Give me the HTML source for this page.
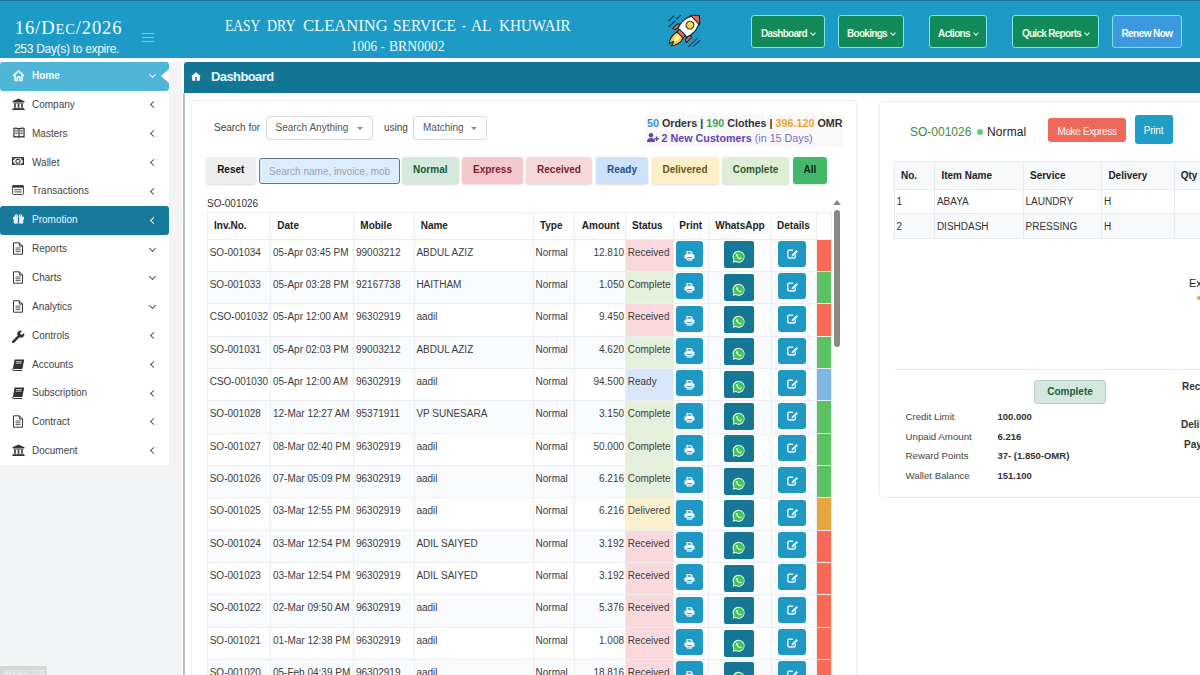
<!DOCTYPE html>
<html><head><meta charset="utf-8">
<style>
*{box-sizing:border-box;margin:0;padding:0}
html,body{width:1200px;height:675px;overflow:hidden}
body{position:relative;background:#f2f4f5;font-family:"Liberation Sans",sans-serif;color:#333}
.abs{position:absolute}
#hdr{left:0;top:0;width:1200px;height:58px;background:#1d9bc6}
#hl1{left:0;top:0;width:1200px;height:1px;background:#187188}
#hl2{left:0;top:1px;width:1200px;height:1px;background:#3098b8}
#whiteline{left:0;top:58px;width:1200px;height:3.5px;background:#fff}
.serif{font-family:"Liberation Serif",serif}
.date{left:14.8px;top:16px;letter-spacing:.9px;font-size:18.5px;color:#f4fbff;white-space:nowrap;line-height:24px}
.date small{font-size:14.5px}
.expire{left:14px;top:41px;font-size:12px;letter-spacing:-0.3px;color:#f4fbff;white-space:nowrap;line-height:16px}
.burger{left:142px;width:12px;height:1px;background:rgba(255,255,255,.45)}
.title{top:14px;font-size:17.5px;color:#f0fbff;white-space:nowrap;line-height:22px;transform-origin:0 0}
.sub{top:37px;font-size:15px;color:#f0fbff;white-space:nowrap;line-height:18px;transform-origin:0 0}
.nb{top:15px;height:33px;background:#138a5a;border:1px solid #7fe4e4;border-radius:3px;color:#eaffe6;font-size:10px;font-weight:bold;line-height:35px;text-align:center;white-space:nowrap;letter-spacing:-.7px}
.nb i{display:inline-block;width:4px;height:4px;border-right:1.5px solid #eaffe6;border-bottom:1.5px solid #eaffe6;transform:rotate(45deg);margin-left:4px;position:relative;top:-2px}
#side{left:0;top:62px;width:169px;height:402.5px;background:#fff}
.mi{position:absolute;left:0;width:169px;height:28.85px;font-size:10px;color:#444;line-height:28.85px}
.mi .t{position:absolute;left:32px;top:0}
.mi svg.ic{position:absolute;left:12px}
.mi .ch{position:absolute;left:151px;top:11.3px;width:5px;height:5px;border-left:1.5px solid #555;border-bottom:1.5px solid #555;transform:rotate(45deg)}
.mi .cd{position:absolute;left:149.5px;top:10.5px;width:5px;height:5px;border-right:1.5px solid #555;border-bottom:1.5px solid #555;transform:rotate(45deg)}
.mi.home{background:#50b6d7;border-radius:3px;color:#f2fbff;font-weight:bold}
.mi.home .cd{border-color:#f2fbff;border-width:0 1.8px 1.8px 0;top:9.8px}
.mi.promo{background:#177a9c;border-radius:3px;color:#eaf8ff}
.mi.promo .ch{border-color:#f2fbff}
.notch{position:absolute;left:161px;top:7px;width:0;height:0;border-top:7.5px solid transparent;border-bottom:7.5px solid transparent;border-right:8px solid #fff}
#pbar{left:184px;top:61.5px;width:1016px;height:31px;background:#137695;border-top-left-radius:3px}
#pbody{left:183px;top:92.5px;width:1017px;height:583px;background:#fff;border-left:2px solid #b5c4c4}
#wstrip{left:181.5px;top:61.5px;width:2px;height:614px;background:#fcfdfd}
.card{background:#fff;border:1px solid #ececec;border-radius:4px}
.lbl{font-size:10px;color:#444;white-space:nowrap}
.sel{height:24px;border:1px solid #d8d8d8;border-radius:3px;background:#fff;font-size:10px;color:#555;line-height:22px;padding-left:9px;white-space:nowrap}
.sel:after{content:"";position:absolute;right:9px;top:10px;border-left:3px solid transparent;border-right:3px solid transparent;border-top:3px solid #888}
.fb{top:156.5px;height:27px;border-radius:3px;font-size:10px;font-weight:bold;text-align:center;line-height:25px;box-shadow:0 1px 2px rgba(0,0,0,.15)}
table{border-collapse:collapse;table-layout:fixed}
#tbl{left:207px;top:212px;font-size:10px;color:#3c3c3c}
#tbl td,#tbl th{border:1px solid #eceef1;overflow:hidden;white-space:nowrap;padding:0}
#tbl th{height:26.5px;font-weight:bold;text-align:left;color:#222;background:#fff}
#tbl td{height:32.35px;vertical-align:top;padding:7px 0 0 1.7px;position:relative}
#tbl tr.s td{background:#f8fafc}
#tbl td.amt{text-align:right;padding-right:1px}
#tbl td.rc{background:#f9d9dc!important}
#tbl td.cp{background:#e4f0da!important}
#tbl td.rd{background:#d8e7fb!important}
#tbl td.dl{background:#fcf0cc!important}
.pbtn{position:absolute;left:1.6px;top:1.4px;width:27px;height:26px;background:#1f99c3;border-radius:3px}
.wbtn{position:absolute;left:14.5px;top:1.9px;width:30px;height:27px;background:#157696;border-radius:2px}
.dbtn{position:absolute;left:6px;top:1.4px;width:28px;height:26px;background:#1f99c3;border-radius:3px}
.bar{position:absolute;left:0;top:0;width:14px;height:100%}
.rt{font-size:10px;color:#333}
#itbl{left:894px;top:161px;width:320px;font-size:10px;color:#333}
#itbl td,#itbl th{border:1px solid #e9ecef;white-space:nowrap;text-align:left}
#itbl th{height:27.5px;background:#f6f8fa;font-weight:bold;color:#222;padding-left:6px}
#itbl td{height:24.75px;padding-left:1.5px}
#itbl tr.s td{background:#f8f9fa}

</style></head><body>
<div id="hdr" class="abs"></div>
<div id="hl1" class="abs"></div>
<div id="hl2" class="abs"></div>
<div id="whiteline" class="abs"></div>
<div class="abs serif date">16/D<small>EC</small>/2026</div>
<div class="abs expire">253 Day(s) to expire.</div>
<div class="abs burger" style="top:33px"></div>
<div class="abs burger" style="top:37px"></div>
<div class="abs burger" style="top:41px"></div>
<div class="abs serif title" style="left:224.9px;transform:scaleX(0.772)">EASY</div>
<div class="abs serif title" style="left:266.9px;transform:scaleX(0.792)">DRY</div>
<div class="abs serif title" style="left:302.9px;transform:scaleX(0.947)">CLEANING</div>
<div class="abs serif title" style="left:392.7px;transform:scaleX(0.878)">SERVICE</div>
<div class="abs serif title" style="left:462.2px;transform:scaleX(0.652)">-</div>
<div class="abs serif title" style="left:470.5px;transform:scaleX(0.879)">AL</div>
<div class="abs serif title" style="left:498.9px;transform:scaleX(0.866)">KHUWAIR</div>
<div class="abs serif sub" style="left:350.7px;transform:scaleX(0.867)">1006</div>
<div class="abs serif sub" style="left:380.7px;transform:scaleX(0.700)">-</div>
<div class="abs serif sub" style="left:389.2px;transform:scaleX(0.912)">BRN0002</div>
<svg class="abs" style="left:664.5px;top:11px" width="40" height="40" viewBox="-20 -20 40 40"><path d="M-16.5 -10 L-11 -15 M-16.5 -4 L-10 -10 M-8.5 -12 L-4.5 -15.5 M3.5 15.7 L12.2 7.3 M7.8 15.7 L15 9.5" stroke="#0b3d5c" stroke-width="1.1" stroke-linecap="round"/><g transform="translate(-1 -0.8) rotate(45) translate(0.6 0)"><path d="M-4 5.5 Q-6 10 -4.5 14 Q-3.5 17.5 -1.5 20 Q-1.2 17 0 15.5 Q1.2 17 1.5 20 Q3.5 17.5 4.5 14 Q6 10 4 5.5 Z" fill="#ffcf45" stroke="#1b1b1b" stroke-width="1"/><path d="M-2 7 Q-3 11 -0.8 15 Q0 13 0.8 15 Q3 11 2 7 Z" fill="#fff1b0"/><path d="M-6.8 -2 L-9.8 0 V7 L-6.8 5.5 Z M6.8 -2 L9.8 0 V7 L6.8 5.5 Z" fill="#f06a50" stroke="#1b1b1b" stroke-width="1"/><path d="M0 -21 Q8.2 -14.5 7.8 -5 Q7.6 0 6.2 3 H-6.2 Q-7.6 0 -7.8 -5 Q-8.2 -14.5 0 -21 Z" fill="#fff" stroke="#1b1b1b" stroke-width="1.1"/><path d="M0 -21 Q4.8 -17.5 6.3 -15 H-6.3 Q-4.8 -17.5 0 -21 Z" fill="#f06a50" stroke="#1b1b1b" stroke-width="1"/><circle cx="0" cy="-7.8" r="3.9" fill="#f6dc4a" stroke="#1b1b1b" stroke-width="1.1"/><rect x="-4.3" y="2.5" width="8.6" height="3.6" fill="#f06a50" stroke="#1b1b1b" stroke-width="1"/></g></svg>
<div class="abs nb" style="left:751px;width:74px">Dashboard<i></i></div>
<div class="abs nb" style="left:838px;width:66px">Bookings<i></i></div>
<div class="abs nb" style="left:929px;width:58px">Actions<i></i></div>
<div class="abs nb" style="left:1012px;width:87px">Quick Reports<i></i></div>
<div class="abs nb" style="left:1112px;width:70px;background:#3c98df;color:#fff;letter-spacing:-.55px">Renew Now</div>

<div id="side" class="abs"></div>
<div class="mi home" style="top:62.00px"><svg class="ic" style="top:7px" width="13" height="13" viewBox="0 0 13 13"><path d="M1.5 6.5 L6.5 1.8 L11.5 6.5 M3 5.3 V11.5 H5.3 V8 H7.7 V11.5 H10 V5.3" fill="none" stroke="#f2fbff" stroke-width="1.6" stroke-linejoin="round" stroke-linecap="round"/></svg><span class="t">Home</span><span class="cd"></span><div class="notch"></div></div>
<div class="mi" style="top:90.85px"><svg class="ic" style="top:6.8px" width="13" height="12" viewBox="0 0 13 12"><path d="M6.5 0.5 L12.5 3.2 V4.2 H0.5 V3.2 Z" fill="#333"/><rect x="1.5" y="4.6" width="10" height="0.9" fill="#333"/><rect x="2.2" y="5.6" width="1.6" height="4" fill="#333"/><rect x="5.7" y="5.6" width="1.6" height="4" fill="#333"/><rect x="9.2" y="5.6" width="1.6" height="4" fill="#333"/><rect x="1" y="9.8" width="11" height="1" fill="#333"/><rect x="0.3" y="10.9" width="12.4" height="1.1" fill="#333"/></svg><span class="t">Company</span><span class="ch"></span></div>
<div class="mi" style="top:119.70px"><svg class="ic" style="top:7px;left:12.5px" width="12" height="11" viewBox="0 0 13 12"><path d="M1 1.5 Q3.5 0.8 6.5 2 Q9.5 0.8 12 1.5 V10.8 Q9.5 10 6.5 11 Q3.5 10 1 10.8 Z M6.5 2 V11" fill="none" stroke="#333" stroke-width="1.3"/><path d="M2.3 3.6 H5.2 M2.3 5.4 H5.2 M2.3 7.2 H5.2 M7.8 3.6 H10.7 M7.8 5.4 H10.7 M7.8 7.2 H10.7" stroke="#333" stroke-width=".8"/></svg><span class="t">Masters</span><span class="ch"></span></div>
<div class="mi" style="top:148.55px"><svg class="ic" style="top:8.3px" width="12" height="8.5" viewBox="0 0 13 9"><rect x="0.6" y="0.6" width="11.8" height="7.8" fill="none" stroke="#333" stroke-width="1.3"/><path d="M0.6 2.8 Q2.6 2.8 2.6 0.6 M12.4 2.8 Q10.4 2.8 10.4 0.6 M0.6 6.2 Q2.6 6.2 2.6 8.4 M12.4 6.2 Q10.4 6.2 10.4 8.4" fill="none" stroke="#333" stroke-width="1.2"/><ellipse cx="6.5" cy="4.5" rx="2.3" ry="2.2" fill="none" stroke="#333" stroke-width="1.1"/></svg><span class="t">Wallet</span><span class="ch"></span></div>
<div class="mi" style="top:177.40px"><svg class="ic" style="top:7.5px" width="12" height="10" viewBox="0 0 13 11"><rect x="0.5" y="0.5" width="12" height="10" rx="1.2" fill="none" stroke="#333" stroke-width="1"/><rect x="0.5" y="0.5" width="12" height="2.4" fill="#333"/><path d="M2.5 5.2 H10.5 M2.5 7.6 H10.5" stroke="#333" stroke-width="1"/></svg><span class="t">Transactions</span><span class="ch"></span></div>
<div class="mi promo" style="top:206.25px"><svg class="ic" style="top:8px;left:13px" width="11" height="9.5" viewBox="0 0 11 9.5"><circle cx="3.4" cy="1.9" r="1.7" fill="#f2fbff"/><circle cx="7.6" cy="1.9" r="1.7" fill="#f2fbff"/><rect x="0" y="2.8" width="11" height="2.8" rx="0.6" fill="#f2fbff"/><rect x="0.8" y="5.2" width="9.4" height="4.3" fill="#f2fbff"/><rect x="4.8" y="3" width="1.4" height="6.5" fill="#177a9c"/><circle cx="3.4" cy="1.9" r=".6" fill="#177a9c"/><circle cx="7.6" cy="1.9" r=".6" fill="#177a9c"/></svg><span class="t">Promotion</span><span class="ch"></span></div>
<div class="mi" style="top:235.10px"><svg class="ic" style="top:6.8px" width="12" height="13" viewBox="0 0 12 13"><path d="M1.5 0.8 H7.3 L10.5 4 V12.2 H1.5 Z M7.3 0.8 V4 H10.5" fill="none" stroke="#333" stroke-width="1"/><path d="M3.5 6 H8.5 M3.5 7.8 H8.5 M3.5 9.6 H8.5" stroke="#333" stroke-width=".8"/></svg><span class="t">Reports</span><span class="cd"></span></div>
<div class="mi" style="top:263.95px"><svg class="ic" style="top:6.8px" width="12" height="13" viewBox="0 0 12 13"><path d="M1.5 0.8 H7.3 L10.5 4 V12.2 H1.5 Z M7.3 0.8 V4 H10.5" fill="none" stroke="#333" stroke-width="1"/><path d="M3.5 6 H8.5 M3.5 7.8 H8.5 M3.5 9.6 H8.5" stroke="#333" stroke-width=".8"/></svg><span class="t">Charts</span><span class="cd"></span></div>
<div class="mi" style="top:292.80px"><svg class="ic" style="top:6.8px" width="12" height="13" viewBox="0 0 12 13"><path d="M1.5 0.8 H7.3 L10.5 4 V12.2 H1.5 Z M7.3 0.8 V4 H10.5" fill="none" stroke="#333" stroke-width="1"/><path d="M3.5 6 H8.5 M3.5 7.8 H8.5 M3.5 9.6 H8.5" stroke="#333" stroke-width=".8"/></svg><span class="t">Analytics</span><span class="cd"></span></div>
<div class="mi" style="top:321.65px"><svg class="ic" style="top:8px" width="13" height="13" viewBox="0 0 13 13"><path d="M1.2 11.8 L6.2 6.8" stroke="#333" stroke-width="2.6" stroke-linecap="round"/><path d="M5.4 5.2 A3.4 3.4 0 0 1 10 0.9 L8.2 2.8 L8.6 4.4 L10.2 4.8 L12 3 A3.4 3.4 0 0 1 7.8 7.6 Z" fill="#333"/></svg><span class="t">Controls</span><span class="ch"></span></div>
<div class="mi" style="top:350.50px"><svg class="ic" style="top:8px" width="13" height="12" viewBox="0 0 13 12"><path d="M2.6 0.6 H12.2 L10.4 10 H0.8 Z" fill="#333"/><path d="M0.8 10 Q0.2 11.4 1.6 11.5 H10" fill="none" stroke="#333" stroke-width="1"/><path d="M4 2.6 H9.8 M3.7 4.2 H9.5" stroke="#fff" stroke-width=".7"/></svg><span class="t">Accounts</span><span class="ch"></span></div>
<div class="mi" style="top:379.35px"><svg class="ic" style="top:8px" width="13" height="12" viewBox="0 0 13 12"><path d="M2.6 0.6 H12.2 L10.4 10 H0.8 Z" fill="#333"/><path d="M0.8 10 Q0.2 11.4 1.6 11.5 H10" fill="none" stroke="#333" stroke-width="1"/><path d="M4 2.6 H9.8 M3.7 4.2 H9.5" stroke="#fff" stroke-width=".7"/></svg><span class="t">Subscription</span><span class="ch"></span></div>
<div class="mi" style="top:408.20px"><svg class="ic" style="top:6.8px" width="12" height="13" viewBox="0 0 12 13"><path d="M1.5 0.8 H7.3 L10.5 4 V12.2 H1.5 Z M7.3 0.8 V4 H10.5" fill="none" stroke="#333" stroke-width="1"/><path d="M3.5 6 H8.5 M3.5 7.8 H8.5 M3.5 9.6 H8.5" stroke="#333" stroke-width=".8"/></svg><span class="t">Contract</span><span class="ch"></span></div>
<div class="mi" style="top:437.05px"><svg class="ic" style="top:6.8px" width="13" height="12" viewBox="0 0 13 12"><path d="M6.5 0.5 L12.5 3.2 V4.2 H0.5 V3.2 Z" fill="#333"/><rect x="1.5" y="4.6" width="10" height="0.9" fill="#333"/><rect x="2.2" y="5.6" width="1.6" height="4" fill="#333"/><rect x="5.7" y="5.6" width="1.6" height="4" fill="#333"/><rect x="9.2" y="5.6" width="1.6" height="4" fill="#333"/><rect x="1" y="9.8" width="11" height="1" fill="#333"/><rect x="0.3" y="10.9" width="12.4" height="1.1" fill="#333"/></svg><span class="t">Document</span><span class="ch"></span></div>

<div id="wstrip" class="abs"></div>
<div id="pbar" class="abs"></div>
<div id="pbody" class="abs"></div>
<svg class="abs" style="left:191px;top:72px" width="10" height="9" viewBox="0 0 10 9"><path d="M5 0.3 L9.8 4.3 L8.8 4.3 V8.8 H1.2 V4.3 H0.2 Z" fill="#fff"/><rect x="4.2" y="5" width="1.6" height="3.8" fill="#137695"/></svg>
<div class="abs" style="left:211px;top:68.5px;font-size:13px;font-weight:bold;letter-spacing:-.6px;color:#e6f8ff;line-height:16px">Dashboard</div>

<div class="abs card" style="left:190.8px;top:100.3px;width:666.7px;height:600px"></div>
<div class="abs card" style="left:879px;top:100.5px;width:340px;height:397px"></div>

<div class="abs lbl" style="left:214px;top:122px">Search for</div>
<div class="abs sel" style="left:265.5px;top:115.5px;width:107px">Search Anything</div>
<div class="abs lbl" style="left:384px;top:122px">using</div>
<div class="abs sel" style="left:413px;top:115.5px;width:74px">Matching</div>

<div class="abs" style="left:645px;top:115px;width:198px;height:32px;background:#f9f9f9;border-radius:3px"></div>
<div class="abs" style="left:647px;top:116px;font-size:10.75px;font-weight:bold;color:#333;white-space:nowrap;line-height:14px"><span style="color:#2f8ee0">50</span> Orders | <span style="color:#3aa655">190</span> Clothes | <span style="color:#f0a030">396.120</span> OMR</div>
<svg class="abs" style="left:647px;top:133px" width="12" height="9" viewBox="0 0 12 9"><circle cx="4" cy="2.3" r="2.3" fill="#6443b4"/><path d="M0 9 Q0 5 4 5 Q8 5 8 9 Z" fill="#6443b4"/><path d="M9.6 3.6 V8 M7.4 5.8 H11.8" stroke="#6443b4" stroke-width="1.4"/></svg><div class="abs" style="left:661.5px;top:131px;font-size:10.75px;color:#7b69c4;white-space:nowrap;line-height:14px"><b style="color:#6443b4">2 New Customers</b> (in 15 Days)</div>

<div class="abs fb" style="left:206px;width:49.5px;background:#eeeeee;color:#111">Reset</div>
<div class="abs" style="left:259px;top:158px;width:140.5px;height:26px;background:#dcedfd;border:1px solid #5d7685;border-radius:3px;font-size:10px;color:#9aa3aa;line-height:25.5px;padding-left:9px;white-space:nowrap;overflow:hidden">Search name, invoice, mob</div>
<div class="abs fb" style="left:402px;width:56.5px;background:#d4e8dc;color:#1c5c38">Normal</div>
<div class="abs fb" style="left:462px;width:61px;background:#f4c9cd;color:#7a1f2c">Express</div>
<div class="abs fb" style="left:526px;width:66px;background:#f7d7da;color:#7a1f2c">Received</div>
<div class="abs fb" style="left:596px;width:52px;background:#cfe2fb;color:#1f4f8a">Ready</div>
<div class="abs fb" style="left:651.5px;width:67px;background:#fdf0c8;color:#6b5310">Delivered</div>
<div class="abs fb" style="left:722px;width:67px;background:#dfefd6;color:#2c5a30">Complete</div>
<div class="abs fb" style="left:793px;width:34px;background:#43b86a;color:#0c2a14">All</div>

<div class="abs" style="left:207px;top:198px;font-size:10px;color:#333;line-height:12px">SO-001026</div>
<table id="tbl" class="abs"><colgroup><col style="width:63.3px"><col style="width:83px"><col style="width:60.4px"><col style="width:119.2px"><col style="width:40.9px"><col style="width:51.3px"><col style="width:48.3px"><col style="width:34.9px"><col style="width:62.8px"><col style="width:45.1px"><col style="width:14.5px"></colgroup><tr><th style="padding-left:6px">Inv.No.</th><th style="padding-left:6px">Date</th><th style="padding-left:6px">Mobile</th><th style="padding-left:6px">Name</th><th style="padding-left:6px">Type</th><th style="padding-left:7px">Amount</th><th style="padding-left:6px">Status</th><th style="padding-left:5px">Print</th><th style="padding-left:6px">WhatsApp</th><th style="padding-left:5px">Details</th><th style="padding-left:0px"></th></tr><tr><td>SO-001034</td><td>05-Apr 03:45 PM</td><td>99003212</td><td>ABDUL AZIZ</td><td>Normal</td><td class="amt">12.810</td><td class="rc">Received</td><td><div class="pbtn"><svg width="11" height="10" viewBox="0 0 11 10" style="position:absolute;left:8px;top:10px"><path d="M3 0.6 H6.8 L8 1.8 V3.4 H3 Z" fill="none" stroke="#fff" stroke-width="1.1"/><rect x="0.5" y="3.4" width="10" height="4.4" rx="1.3" fill="#fff"/><rect x="2.8" y="6" width="5.4" height="1" fill="#3aa0c8"/><rect x="2.8" y="7" width="5.4" height="2.6" fill="#fff"/><rect x="3.6" y="7.8" width="3.8" height="0.9" fill="#6cc0dc"/></svg></div></td><td><div class="wbtn"><svg width="13.5" height="13.5" viewBox="0 0 16 16" style="position:absolute;left:8.3px;top:9px"><path d="M8 0.8 A7.1 7.1 0 0 0 1.8 11.6 L0.8 15.2 L4.5 14.2 A7.1 7.1 0 1 0 8 0.8 Z" fill="#fff"/><path d="M8 2 A6 6 0 0 0 2.9 11.2 L2.3 13.6 L4.8 13 A6 6 0 1 0 8 2 Z" fill="#3fc351"/><path d="M5.6 4.6 Q5 4.8 4.9 5.8 Q5 7.6 6.8 9.4 Q8.6 11 10.3 11 Q11.2 10.9 11.4 10.1 L11.4 9.6 L9.9 8.9 L9.2 9.6 Q8 9.2 6.8 7.6 L7.3 6.8 L6.6 5 Z" fill="#fff"/></svg></div></td><td><div class="dbtn"><svg width="12" height="10" viewBox="0 0 12 10" style="position:absolute;left:8.5px;top:8.5px"><path d="M6 1.3 H2.2 Q0.8 1.3 0.8 2.7 V7.6 Q0.8 9 2.2 9 H7 Q8.4 9 8.4 7.6 V5.6" fill="none" stroke="#e6fbff" stroke-width="1.4"/><path d="M4.6 7.4 L5 5.6 L9.6 1 L11 2.4 L6.4 7 Z" fill="#e6fbff"/></svg></div></td><td><div class="bar" style="background:#f86a56"></div></td></tr><tr class="s"><td>SO-001033</td><td>05-Apr 03:28 PM</td><td>92167738</td><td>HAITHAM</td><td>Normal</td><td class="amt">1.050</td><td class="cp">Complete</td><td><div class="pbtn"><svg width="11" height="10" viewBox="0 0 11 10" style="position:absolute;left:8px;top:10px"><path d="M3 0.6 H6.8 L8 1.8 V3.4 H3 Z" fill="none" stroke="#fff" stroke-width="1.1"/><rect x="0.5" y="3.4" width="10" height="4.4" rx="1.3" fill="#fff"/><rect x="2.8" y="6" width="5.4" height="1" fill="#3aa0c8"/><rect x="2.8" y="7" width="5.4" height="2.6" fill="#fff"/><rect x="3.6" y="7.8" width="3.8" height="0.9" fill="#6cc0dc"/></svg></div></td><td><div class="wbtn"><svg width="13.5" height="13.5" viewBox="0 0 16 16" style="position:absolute;left:8.3px;top:9px"><path d="M8 0.8 A7.1 7.1 0 0 0 1.8 11.6 L0.8 15.2 L4.5 14.2 A7.1 7.1 0 1 0 8 0.8 Z" fill="#fff"/><path d="M8 2 A6 6 0 0 0 2.9 11.2 L2.3 13.6 L4.8 13 A6 6 0 1 0 8 2 Z" fill="#3fc351"/><path d="M5.6 4.6 Q5 4.8 4.9 5.8 Q5 7.6 6.8 9.4 Q8.6 11 10.3 11 Q11.2 10.9 11.4 10.1 L11.4 9.6 L9.9 8.9 L9.2 9.6 Q8 9.2 6.8 7.6 L7.3 6.8 L6.6 5 Z" fill="#fff"/></svg></div></td><td><div class="dbtn"><svg width="12" height="10" viewBox="0 0 12 10" style="position:absolute;left:8.5px;top:8.5px"><path d="M6 1.3 H2.2 Q0.8 1.3 0.8 2.7 V7.6 Q0.8 9 2.2 9 H7 Q8.4 9 8.4 7.6 V5.6" fill="none" stroke="#e6fbff" stroke-width="1.4"/><path d="M4.6 7.4 L5 5.6 L9.6 1 L11 2.4 L6.4 7 Z" fill="#e6fbff"/></svg></div></td><td><div class="bar" style="background:#5cc163"></div></td></tr><tr><td>CSO-001032</td><td>05-Apr 12:00 AM</td><td>96302919</td><td>aadil</td><td>Normal</td><td class="amt">9.450</td><td class="rc">Received</td><td><div class="pbtn"><svg width="11" height="10" viewBox="0 0 11 10" style="position:absolute;left:8px;top:10px"><path d="M3 0.6 H6.8 L8 1.8 V3.4 H3 Z" fill="none" stroke="#fff" stroke-width="1.1"/><rect x="0.5" y="3.4" width="10" height="4.4" rx="1.3" fill="#fff"/><rect x="2.8" y="6" width="5.4" height="1" fill="#3aa0c8"/><rect x="2.8" y="7" width="5.4" height="2.6" fill="#fff"/><rect x="3.6" y="7.8" width="3.8" height="0.9" fill="#6cc0dc"/></svg></div></td><td><div class="wbtn"><svg width="13.5" height="13.5" viewBox="0 0 16 16" style="position:absolute;left:8.3px;top:9px"><path d="M8 0.8 A7.1 7.1 0 0 0 1.8 11.6 L0.8 15.2 L4.5 14.2 A7.1 7.1 0 1 0 8 0.8 Z" fill="#fff"/><path d="M8 2 A6 6 0 0 0 2.9 11.2 L2.3 13.6 L4.8 13 A6 6 0 1 0 8 2 Z" fill="#3fc351"/><path d="M5.6 4.6 Q5 4.8 4.9 5.8 Q5 7.6 6.8 9.4 Q8.6 11 10.3 11 Q11.2 10.9 11.4 10.1 L11.4 9.6 L9.9 8.9 L9.2 9.6 Q8 9.2 6.8 7.6 L7.3 6.8 L6.6 5 Z" fill="#fff"/></svg></div></td><td><div class="dbtn"><svg width="12" height="10" viewBox="0 0 12 10" style="position:absolute;left:8.5px;top:8.5px"><path d="M6 1.3 H2.2 Q0.8 1.3 0.8 2.7 V7.6 Q0.8 9 2.2 9 H7 Q8.4 9 8.4 7.6 V5.6" fill="none" stroke="#e6fbff" stroke-width="1.4"/><path d="M4.6 7.4 L5 5.6 L9.6 1 L11 2.4 L6.4 7 Z" fill="#e6fbff"/></svg></div></td><td><div class="bar" style="background:#f86a56"></div></td></tr><tr class="s"><td>SO-001031</td><td>05-Apr 02:03 PM</td><td>99003212</td><td>ABDUL AZIZ</td><td>Normal</td><td class="amt">4.620</td><td class="cp">Complete</td><td><div class="pbtn"><svg width="11" height="10" viewBox="0 0 11 10" style="position:absolute;left:8px;top:10px"><path d="M3 0.6 H6.8 L8 1.8 V3.4 H3 Z" fill="none" stroke="#fff" stroke-width="1.1"/><rect x="0.5" y="3.4" width="10" height="4.4" rx="1.3" fill="#fff"/><rect x="2.8" y="6" width="5.4" height="1" fill="#3aa0c8"/><rect x="2.8" y="7" width="5.4" height="2.6" fill="#fff"/><rect x="3.6" y="7.8" width="3.8" height="0.9" fill="#6cc0dc"/></svg></div></td><td><div class="wbtn"><svg width="13.5" height="13.5" viewBox="0 0 16 16" style="position:absolute;left:8.3px;top:9px"><path d="M8 0.8 A7.1 7.1 0 0 0 1.8 11.6 L0.8 15.2 L4.5 14.2 A7.1 7.1 0 1 0 8 0.8 Z" fill="#fff"/><path d="M8 2 A6 6 0 0 0 2.9 11.2 L2.3 13.6 L4.8 13 A6 6 0 1 0 8 2 Z" fill="#3fc351"/><path d="M5.6 4.6 Q5 4.8 4.9 5.8 Q5 7.6 6.8 9.4 Q8.6 11 10.3 11 Q11.2 10.9 11.4 10.1 L11.4 9.6 L9.9 8.9 L9.2 9.6 Q8 9.2 6.8 7.6 L7.3 6.8 L6.6 5 Z" fill="#fff"/></svg></div></td><td><div class="dbtn"><svg width="12" height="10" viewBox="0 0 12 10" style="position:absolute;left:8.5px;top:8.5px"><path d="M6 1.3 H2.2 Q0.8 1.3 0.8 2.7 V7.6 Q0.8 9 2.2 9 H7 Q8.4 9 8.4 7.6 V5.6" fill="none" stroke="#e6fbff" stroke-width="1.4"/><path d="M4.6 7.4 L5 5.6 L9.6 1 L11 2.4 L6.4 7 Z" fill="#e6fbff"/></svg></div></td><td><div class="bar" style="background:#5cc163"></div></td></tr><tr><td>CSO-001030</td><td>05-Apr 12:00 AM</td><td>96302919</td><td>aadil</td><td>Normal</td><td class="amt">94.500</td><td class="rd">Ready</td><td><div class="pbtn"><svg width="11" height="10" viewBox="0 0 11 10" style="position:absolute;left:8px;top:10px"><path d="M3 0.6 H6.8 L8 1.8 V3.4 H3 Z" fill="none" stroke="#fff" stroke-width="1.1"/><rect x="0.5" y="3.4" width="10" height="4.4" rx="1.3" fill="#fff"/><rect x="2.8" y="6" width="5.4" height="1" fill="#3aa0c8"/><rect x="2.8" y="7" width="5.4" height="2.6" fill="#fff"/><rect x="3.6" y="7.8" width="3.8" height="0.9" fill="#6cc0dc"/></svg></div></td><td><div class="wbtn"><svg width="13.5" height="13.5" viewBox="0 0 16 16" style="position:absolute;left:8.3px;top:9px"><path d="M8 0.8 A7.1 7.1 0 0 0 1.8 11.6 L0.8 15.2 L4.5 14.2 A7.1 7.1 0 1 0 8 0.8 Z" fill="#fff"/><path d="M8 2 A6 6 0 0 0 2.9 11.2 L2.3 13.6 L4.8 13 A6 6 0 1 0 8 2 Z" fill="#3fc351"/><path d="M5.6 4.6 Q5 4.8 4.9 5.8 Q5 7.6 6.8 9.4 Q8.6 11 10.3 11 Q11.2 10.9 11.4 10.1 L11.4 9.6 L9.9 8.9 L9.2 9.6 Q8 9.2 6.8 7.6 L7.3 6.8 L6.6 5 Z" fill="#fff"/></svg></div></td><td><div class="dbtn"><svg width="12" height="10" viewBox="0 0 12 10" style="position:absolute;left:8.5px;top:8.5px"><path d="M6 1.3 H2.2 Q0.8 1.3 0.8 2.7 V7.6 Q0.8 9 2.2 9 H7 Q8.4 9 8.4 7.6 V5.6" fill="none" stroke="#e6fbff" stroke-width="1.4"/><path d="M4.6 7.4 L5 5.6 L9.6 1 L11 2.4 L6.4 7 Z" fill="#e6fbff"/></svg></div></td><td><div class="bar" style="background:#7db7e2"></div></td></tr><tr class="s"><td>SO-001028</td><td>12-Mar 12:27 AM</td><td>95371911</td><td>VP SUNESARA</td><td>Normal</td><td class="amt">3.150</td><td class="cp">Complete</td><td><div class="pbtn"><svg width="11" height="10" viewBox="0 0 11 10" style="position:absolute;left:8px;top:10px"><path d="M3 0.6 H6.8 L8 1.8 V3.4 H3 Z" fill="none" stroke="#fff" stroke-width="1.1"/><rect x="0.5" y="3.4" width="10" height="4.4" rx="1.3" fill="#fff"/><rect x="2.8" y="6" width="5.4" height="1" fill="#3aa0c8"/><rect x="2.8" y="7" width="5.4" height="2.6" fill="#fff"/><rect x="3.6" y="7.8" width="3.8" height="0.9" fill="#6cc0dc"/></svg></div></td><td><div class="wbtn"><svg width="13.5" height="13.5" viewBox="0 0 16 16" style="position:absolute;left:8.3px;top:9px"><path d="M8 0.8 A7.1 7.1 0 0 0 1.8 11.6 L0.8 15.2 L4.5 14.2 A7.1 7.1 0 1 0 8 0.8 Z" fill="#fff"/><path d="M8 2 A6 6 0 0 0 2.9 11.2 L2.3 13.6 L4.8 13 A6 6 0 1 0 8 2 Z" fill="#3fc351"/><path d="M5.6 4.6 Q5 4.8 4.9 5.8 Q5 7.6 6.8 9.4 Q8.6 11 10.3 11 Q11.2 10.9 11.4 10.1 L11.4 9.6 L9.9 8.9 L9.2 9.6 Q8 9.2 6.8 7.6 L7.3 6.8 L6.6 5 Z" fill="#fff"/></svg></div></td><td><div class="dbtn"><svg width="12" height="10" viewBox="0 0 12 10" style="position:absolute;left:8.5px;top:8.5px"><path d="M6 1.3 H2.2 Q0.8 1.3 0.8 2.7 V7.6 Q0.8 9 2.2 9 H7 Q8.4 9 8.4 7.6 V5.6" fill="none" stroke="#e6fbff" stroke-width="1.4"/><path d="M4.6 7.4 L5 5.6 L9.6 1 L11 2.4 L6.4 7 Z" fill="#e6fbff"/></svg></div></td><td><div class="bar" style="background:#5cc163"></div></td></tr><tr><td>SO-001027</td><td>08-Mar 02:40 PM</td><td>96302919</td><td>aadil</td><td>Normal</td><td class="amt">50.000</td><td class="cp">Complete</td><td><div class="pbtn"><svg width="11" height="10" viewBox="0 0 11 10" style="position:absolute;left:8px;top:10px"><path d="M3 0.6 H6.8 L8 1.8 V3.4 H3 Z" fill="none" stroke="#fff" stroke-width="1.1"/><rect x="0.5" y="3.4" width="10" height="4.4" rx="1.3" fill="#fff"/><rect x="2.8" y="6" width="5.4" height="1" fill="#3aa0c8"/><rect x="2.8" y="7" width="5.4" height="2.6" fill="#fff"/><rect x="3.6" y="7.8" width="3.8" height="0.9" fill="#6cc0dc"/></svg></div></td><td><div class="wbtn"><svg width="13.5" height="13.5" viewBox="0 0 16 16" style="position:absolute;left:8.3px;top:9px"><path d="M8 0.8 A7.1 7.1 0 0 0 1.8 11.6 L0.8 15.2 L4.5 14.2 A7.1 7.1 0 1 0 8 0.8 Z" fill="#fff"/><path d="M8 2 A6 6 0 0 0 2.9 11.2 L2.3 13.6 L4.8 13 A6 6 0 1 0 8 2 Z" fill="#3fc351"/><path d="M5.6 4.6 Q5 4.8 4.9 5.8 Q5 7.6 6.8 9.4 Q8.6 11 10.3 11 Q11.2 10.9 11.4 10.1 L11.4 9.6 L9.9 8.9 L9.2 9.6 Q8 9.2 6.8 7.6 L7.3 6.8 L6.6 5 Z" fill="#fff"/></svg></div></td><td><div class="dbtn"><svg width="12" height="10" viewBox="0 0 12 10" style="position:absolute;left:8.5px;top:8.5px"><path d="M6 1.3 H2.2 Q0.8 1.3 0.8 2.7 V7.6 Q0.8 9 2.2 9 H7 Q8.4 9 8.4 7.6 V5.6" fill="none" stroke="#e6fbff" stroke-width="1.4"/><path d="M4.6 7.4 L5 5.6 L9.6 1 L11 2.4 L6.4 7 Z" fill="#e6fbff"/></svg></div></td><td><div class="bar" style="background:#5cc163"></div></td></tr><tr class="s"><td>SO-001026</td><td>07-Mar 05:09 PM</td><td>96302919</td><td>aadil</td><td>Normal</td><td class="amt">6.216</td><td class="cp">Complete</td><td><div class="pbtn"><svg width="11" height="10" viewBox="0 0 11 10" style="position:absolute;left:8px;top:10px"><path d="M3 0.6 H6.8 L8 1.8 V3.4 H3 Z" fill="none" stroke="#fff" stroke-width="1.1"/><rect x="0.5" y="3.4" width="10" height="4.4" rx="1.3" fill="#fff"/><rect x="2.8" y="6" width="5.4" height="1" fill="#3aa0c8"/><rect x="2.8" y="7" width="5.4" height="2.6" fill="#fff"/><rect x="3.6" y="7.8" width="3.8" height="0.9" fill="#6cc0dc"/></svg></div></td><td><div class="wbtn"><svg width="13.5" height="13.5" viewBox="0 0 16 16" style="position:absolute;left:8.3px;top:9px"><path d="M8 0.8 A7.1 7.1 0 0 0 1.8 11.6 L0.8 15.2 L4.5 14.2 A7.1 7.1 0 1 0 8 0.8 Z" fill="#fff"/><path d="M8 2 A6 6 0 0 0 2.9 11.2 L2.3 13.6 L4.8 13 A6 6 0 1 0 8 2 Z" fill="#3fc351"/><path d="M5.6 4.6 Q5 4.8 4.9 5.8 Q5 7.6 6.8 9.4 Q8.6 11 10.3 11 Q11.2 10.9 11.4 10.1 L11.4 9.6 L9.9 8.9 L9.2 9.6 Q8 9.2 6.8 7.6 L7.3 6.8 L6.6 5 Z" fill="#fff"/></svg></div></td><td><div class="dbtn"><svg width="12" height="10" viewBox="0 0 12 10" style="position:absolute;left:8.5px;top:8.5px"><path d="M6 1.3 H2.2 Q0.8 1.3 0.8 2.7 V7.6 Q0.8 9 2.2 9 H7 Q8.4 9 8.4 7.6 V5.6" fill="none" stroke="#e6fbff" stroke-width="1.4"/><path d="M4.6 7.4 L5 5.6 L9.6 1 L11 2.4 L6.4 7 Z" fill="#e6fbff"/></svg></div></td><td><div class="bar" style="background:#5cc163"></div></td></tr><tr><td>SO-001025</td><td>03-Mar 12:55 PM</td><td>96302919</td><td>aadil</td><td>Normal</td><td class="amt">6.216</td><td class="dl">Delivered</td><td><div class="pbtn"><svg width="11" height="10" viewBox="0 0 11 10" style="position:absolute;left:8px;top:10px"><path d="M3 0.6 H6.8 L8 1.8 V3.4 H3 Z" fill="none" stroke="#fff" stroke-width="1.1"/><rect x="0.5" y="3.4" width="10" height="4.4" rx="1.3" fill="#fff"/><rect x="2.8" y="6" width="5.4" height="1" fill="#3aa0c8"/><rect x="2.8" y="7" width="5.4" height="2.6" fill="#fff"/><rect x="3.6" y="7.8" width="3.8" height="0.9" fill="#6cc0dc"/></svg></div></td><td><div class="wbtn"><svg width="13.5" height="13.5" viewBox="0 0 16 16" style="position:absolute;left:8.3px;top:9px"><path d="M8 0.8 A7.1 7.1 0 0 0 1.8 11.6 L0.8 15.2 L4.5 14.2 A7.1 7.1 0 1 0 8 0.8 Z" fill="#fff"/><path d="M8 2 A6 6 0 0 0 2.9 11.2 L2.3 13.6 L4.8 13 A6 6 0 1 0 8 2 Z" fill="#3fc351"/><path d="M5.6 4.6 Q5 4.8 4.9 5.8 Q5 7.6 6.8 9.4 Q8.6 11 10.3 11 Q11.2 10.9 11.4 10.1 L11.4 9.6 L9.9 8.9 L9.2 9.6 Q8 9.2 6.8 7.6 L7.3 6.8 L6.6 5 Z" fill="#fff"/></svg></div></td><td><div class="dbtn"><svg width="12" height="10" viewBox="0 0 12 10" style="position:absolute;left:8.5px;top:8.5px"><path d="M6 1.3 H2.2 Q0.8 1.3 0.8 2.7 V7.6 Q0.8 9 2.2 9 H7 Q8.4 9 8.4 7.6 V5.6" fill="none" stroke="#e6fbff" stroke-width="1.4"/><path d="M4.6 7.4 L5 5.6 L9.6 1 L11 2.4 L6.4 7 Z" fill="#e6fbff"/></svg></div></td><td><div class="bar" style="background:#e6a73e"></div></td></tr><tr class="s"><td>SO-001024</td><td>03-Mar 12:54 PM</td><td>96302919</td><td>ADIL SAIYED</td><td>Normal</td><td class="amt">3.192</td><td class="rc">Received</td><td><div class="pbtn"><svg width="11" height="10" viewBox="0 0 11 10" style="position:absolute;left:8px;top:10px"><path d="M3 0.6 H6.8 L8 1.8 V3.4 H3 Z" fill="none" stroke="#fff" stroke-width="1.1"/><rect x="0.5" y="3.4" width="10" height="4.4" rx="1.3" fill="#fff"/><rect x="2.8" y="6" width="5.4" height="1" fill="#3aa0c8"/><rect x="2.8" y="7" width="5.4" height="2.6" fill="#fff"/><rect x="3.6" y="7.8" width="3.8" height="0.9" fill="#6cc0dc"/></svg></div></td><td><div class="wbtn"><svg width="13.5" height="13.5" viewBox="0 0 16 16" style="position:absolute;left:8.3px;top:9px"><path d="M8 0.8 A7.1 7.1 0 0 0 1.8 11.6 L0.8 15.2 L4.5 14.2 A7.1 7.1 0 1 0 8 0.8 Z" fill="#fff"/><path d="M8 2 A6 6 0 0 0 2.9 11.2 L2.3 13.6 L4.8 13 A6 6 0 1 0 8 2 Z" fill="#3fc351"/><path d="M5.6 4.6 Q5 4.8 4.9 5.8 Q5 7.6 6.8 9.4 Q8.6 11 10.3 11 Q11.2 10.9 11.4 10.1 L11.4 9.6 L9.9 8.9 L9.2 9.6 Q8 9.2 6.8 7.6 L7.3 6.8 L6.6 5 Z" fill="#fff"/></svg></div></td><td><div class="dbtn"><svg width="12" height="10" viewBox="0 0 12 10" style="position:absolute;left:8.5px;top:8.5px"><path d="M6 1.3 H2.2 Q0.8 1.3 0.8 2.7 V7.6 Q0.8 9 2.2 9 H7 Q8.4 9 8.4 7.6 V5.6" fill="none" stroke="#e6fbff" stroke-width="1.4"/><path d="M4.6 7.4 L5 5.6 L9.6 1 L11 2.4 L6.4 7 Z" fill="#e6fbff"/></svg></div></td><td><div class="bar" style="background:#f86a56"></div></td></tr><tr><td>SO-001023</td><td>03-Mar 12:54 PM</td><td>96302919</td><td>ADIL SAIYED</td><td>Normal</td><td class="amt">3.192</td><td class="rc">Received</td><td><div class="pbtn"><svg width="11" height="10" viewBox="0 0 11 10" style="position:absolute;left:8px;top:10px"><path d="M3 0.6 H6.8 L8 1.8 V3.4 H3 Z" fill="none" stroke="#fff" stroke-width="1.1"/><rect x="0.5" y="3.4" width="10" height="4.4" rx="1.3" fill="#fff"/><rect x="2.8" y="6" width="5.4" height="1" fill="#3aa0c8"/><rect x="2.8" y="7" width="5.4" height="2.6" fill="#fff"/><rect x="3.6" y="7.8" width="3.8" height="0.9" fill="#6cc0dc"/></svg></div></td><td><div class="wbtn"><svg width="13.5" height="13.5" viewBox="0 0 16 16" style="position:absolute;left:8.3px;top:9px"><path d="M8 0.8 A7.1 7.1 0 0 0 1.8 11.6 L0.8 15.2 L4.5 14.2 A7.1 7.1 0 1 0 8 0.8 Z" fill="#fff"/><path d="M8 2 A6 6 0 0 0 2.9 11.2 L2.3 13.6 L4.8 13 A6 6 0 1 0 8 2 Z" fill="#3fc351"/><path d="M5.6 4.6 Q5 4.8 4.9 5.8 Q5 7.6 6.8 9.4 Q8.6 11 10.3 11 Q11.2 10.9 11.4 10.1 L11.4 9.6 L9.9 8.9 L9.2 9.6 Q8 9.2 6.8 7.6 L7.3 6.8 L6.6 5 Z" fill="#fff"/></svg></div></td><td><div class="dbtn"><svg width="12" height="10" viewBox="0 0 12 10" style="position:absolute;left:8.5px;top:8.5px"><path d="M6 1.3 H2.2 Q0.8 1.3 0.8 2.7 V7.6 Q0.8 9 2.2 9 H7 Q8.4 9 8.4 7.6 V5.6" fill="none" stroke="#e6fbff" stroke-width="1.4"/><path d="M4.6 7.4 L5 5.6 L9.6 1 L11 2.4 L6.4 7 Z" fill="#e6fbff"/></svg></div></td><td><div class="bar" style="background:#f86a56"></div></td></tr><tr class="s"><td>SO-001022</td><td>02-Mar 09:50 AM</td><td>96302919</td><td>aadil</td><td>Normal</td><td class="amt">5.376</td><td class="rc">Received</td><td><div class="pbtn"><svg width="11" height="10" viewBox="0 0 11 10" style="position:absolute;left:8px;top:10px"><path d="M3 0.6 H6.8 L8 1.8 V3.4 H3 Z" fill="none" stroke="#fff" stroke-width="1.1"/><rect x="0.5" y="3.4" width="10" height="4.4" rx="1.3" fill="#fff"/><rect x="2.8" y="6" width="5.4" height="1" fill="#3aa0c8"/><rect x="2.8" y="7" width="5.4" height="2.6" fill="#fff"/><rect x="3.6" y="7.8" width="3.8" height="0.9" fill="#6cc0dc"/></svg></div></td><td><div class="wbtn"><svg width="13.5" height="13.5" viewBox="0 0 16 16" style="position:absolute;left:8.3px;top:9px"><path d="M8 0.8 A7.1 7.1 0 0 0 1.8 11.6 L0.8 15.2 L4.5 14.2 A7.1 7.1 0 1 0 8 0.8 Z" fill="#fff"/><path d="M8 2 A6 6 0 0 0 2.9 11.2 L2.3 13.6 L4.8 13 A6 6 0 1 0 8 2 Z" fill="#3fc351"/><path d="M5.6 4.6 Q5 4.8 4.9 5.8 Q5 7.6 6.8 9.4 Q8.6 11 10.3 11 Q11.2 10.9 11.4 10.1 L11.4 9.6 L9.9 8.9 L9.2 9.6 Q8 9.2 6.8 7.6 L7.3 6.8 L6.6 5 Z" fill="#fff"/></svg></div></td><td><div class="dbtn"><svg width="12" height="10" viewBox="0 0 12 10" style="position:absolute;left:8.5px;top:8.5px"><path d="M6 1.3 H2.2 Q0.8 1.3 0.8 2.7 V7.6 Q0.8 9 2.2 9 H7 Q8.4 9 8.4 7.6 V5.6" fill="none" stroke="#e6fbff" stroke-width="1.4"/><path d="M4.6 7.4 L5 5.6 L9.6 1 L11 2.4 L6.4 7 Z" fill="#e6fbff"/></svg></div></td><td><div class="bar" style="background:#f86a56"></div></td></tr><tr><td>SO-001021</td><td>01-Mar 12:38 PM</td><td>96302919</td><td>aadil</td><td>Normal</td><td class="amt">1.008</td><td class="rc">Received</td><td><div class="pbtn"><svg width="11" height="10" viewBox="0 0 11 10" style="position:absolute;left:8px;top:10px"><path d="M3 0.6 H6.8 L8 1.8 V3.4 H3 Z" fill="none" stroke="#fff" stroke-width="1.1"/><rect x="0.5" y="3.4" width="10" height="4.4" rx="1.3" fill="#fff"/><rect x="2.8" y="6" width="5.4" height="1" fill="#3aa0c8"/><rect x="2.8" y="7" width="5.4" height="2.6" fill="#fff"/><rect x="3.6" y="7.8" width="3.8" height="0.9" fill="#6cc0dc"/></svg></div></td><td><div class="wbtn"><svg width="13.5" height="13.5" viewBox="0 0 16 16" style="position:absolute;left:8.3px;top:9px"><path d="M8 0.8 A7.1 7.1 0 0 0 1.8 11.6 L0.8 15.2 L4.5 14.2 A7.1 7.1 0 1 0 8 0.8 Z" fill="#fff"/><path d="M8 2 A6 6 0 0 0 2.9 11.2 L2.3 13.6 L4.8 13 A6 6 0 1 0 8 2 Z" fill="#3fc351"/><path d="M5.6 4.6 Q5 4.8 4.9 5.8 Q5 7.6 6.8 9.4 Q8.6 11 10.3 11 Q11.2 10.9 11.4 10.1 L11.4 9.6 L9.9 8.9 L9.2 9.6 Q8 9.2 6.8 7.6 L7.3 6.8 L6.6 5 Z" fill="#fff"/></svg></div></td><td><div class="dbtn"><svg width="12" height="10" viewBox="0 0 12 10" style="position:absolute;left:8.5px;top:8.5px"><path d="M6 1.3 H2.2 Q0.8 1.3 0.8 2.7 V7.6 Q0.8 9 2.2 9 H7 Q8.4 9 8.4 7.6 V5.6" fill="none" stroke="#e6fbff" stroke-width="1.4"/><path d="M4.6 7.4 L5 5.6 L9.6 1 L11 2.4 L6.4 7 Z" fill="#e6fbff"/></svg></div></td><td><div class="bar" style="background:#f86a56"></div></td></tr><tr class="s"><td>SO-001020</td><td>05-Feb 04:39 PM</td><td>96302919</td><td>aadil</td><td>Normal</td><td class="amt">18.816</td><td class="rc">Received</td><td><div class="pbtn"><svg width="11" height="10" viewBox="0 0 11 10" style="position:absolute;left:8px;top:10px"><path d="M3 0.6 H6.8 L8 1.8 V3.4 H3 Z" fill="none" stroke="#fff" stroke-width="1.1"/><rect x="0.5" y="3.4" width="10" height="4.4" rx="1.3" fill="#fff"/><rect x="2.8" y="6" width="5.4" height="1" fill="#3aa0c8"/><rect x="2.8" y="7" width="5.4" height="2.6" fill="#fff"/><rect x="3.6" y="7.8" width="3.8" height="0.9" fill="#6cc0dc"/></svg></div></td><td><div class="wbtn"><svg width="13.5" height="13.5" viewBox="0 0 16 16" style="position:absolute;left:8.3px;top:9px"><path d="M8 0.8 A7.1 7.1 0 0 0 1.8 11.6 L0.8 15.2 L4.5 14.2 A7.1 7.1 0 1 0 8 0.8 Z" fill="#fff"/><path d="M8 2 A6 6 0 0 0 2.9 11.2 L2.3 13.6 L4.8 13 A6 6 0 1 0 8 2 Z" fill="#3fc351"/><path d="M5.6 4.6 Q5 4.8 4.9 5.8 Q5 7.6 6.8 9.4 Q8.6 11 10.3 11 Q11.2 10.9 11.4 10.1 L11.4 9.6 L9.9 8.9 L9.2 9.6 Q8 9.2 6.8 7.6 L7.3 6.8 L6.6 5 Z" fill="#fff"/></svg></div></td><td><div class="dbtn"><svg width="12" height="10" viewBox="0 0 12 10" style="position:absolute;left:8.5px;top:8.5px"><path d="M6 1.3 H2.2 Q0.8 1.3 0.8 2.7 V7.6 Q0.8 9 2.2 9 H7 Q8.4 9 8.4 7.6 V5.6" fill="none" stroke="#e6fbff" stroke-width="1.4"/><path d="M4.6 7.4 L5 5.6 L9.6 1 L11 2.4 L6.4 7 Z" fill="#e6fbff"/></svg></div></td><td><div class="bar" style="background:#f86a56"></div></td></tr></table>
<div class="abs" style="left:834px;top:210px;width:6px;height:137px;background:#888;border-radius:3px"></div>
<div class="abs" style="left:833px;top:200px;width:0;height:0;border-left:4px solid transparent;border-right:4px solid transparent;border-bottom:5px solid #8a8a8a"></div>

<div class="abs" style="left:910px;top:125.2px;font-size:12px;color:#3a8d3a;white-space:nowrap;line-height:14px">SO-001026 <span style="display:inline-block;width:6px;height:6px;border-radius:50%;background:#5fcf6f;vertical-align:1px;margin:0 1px 0 2px"></span> <span style="color:#222;letter-spacing:.1px">Normal</span></div>
<div class="abs" style="left:1048px;top:117.5px;width:78px;height:24px;background:#f0685a;border-radius:3px;color:#fff;font-size:10px;letter-spacing:-.35px;text-align:center;line-height:27px">Make Express</div>
<div class="abs" style="left:1134.5px;top:115px;width:38px;height:29px;background:#1f9ec8;border-radius:3px;color:#fff;font-size:10px;letter-spacing:-.2px;text-align:center;line-height:31.5px">Print</div>

<table id="itbl" class="abs"><colgroup><col style="width:40.4px"><col style="width:88.6px"><col style="width:78.4px"><col style="width:72.3px"><col style="width:40px"></colgroup>
<tr><th>No.</th><th>Item Name</th><th>Service</th><th>Delivery</th><th>Qty</th></tr>
<tr><td>1</td><td>ABAYA</td><td>LAUNDRY</td><td>H</td><td></td></tr>
<tr class="s"><td>2</td><td>DISHDASH</td><td>PRESSING</td><td>H</td><td></td></tr>
</table>

<div class="abs" style="left:1189px;top:276px;font-size:11px;color:#222;line-height:14px">Ex</div>
<div class="abs" style="left:1197px;top:296px;width:4px;height:4px;border-radius:50%;background:#f0a030"></div>
<div class="abs" style="left:894px;top:369px;width:306px;height:1px;background:#eceeef"></div>
<div class="abs" style="left:1034px;top:379.5px;width:72px;height:24px;background:#d5e8df;border:1px solid #b9d2c6;border-radius:3px;color:#1c5c38;font-size:10px;font-weight:bold;text-align:center;line-height:21.5px">Complete</div>
<div class="abs rt" style="left:1182px;top:381.3px;font-weight:bold">Rec</div>
<div class="abs rt" style="left:1181px;top:419.3px;font-weight:bold">Deli</div>
<div class="abs rt" style="left:1184px;top:439.3px;font-weight:bold">Pay</div>

<div class="abs rt" style="font-size:9.7px;left:905.5px;top:411px;line-height:12px;color:#444">Credit Limit</div>
<div class="abs rt" style="font-size:9.7px;left:905.5px;top:430.5px;line-height:12px;color:#444">Unpaid Amount</div>
<div class="abs rt" style="font-size:9.7px;left:905.5px;top:450px;line-height:12px;color:#444">Reward Points</div>
<div class="abs rt" style="font-size:9.7px;left:905.5px;top:469.5px;line-height:12px;color:#444">Wallet Balance</div>
<div class="abs rt" style="font-size:9.5px;left:997.5px;top:411px;line-height:12px;font-weight:bold">100.000</div>
<div class="abs rt" style="font-size:9.5px;left:997.5px;top:430.5px;line-height:12px;font-weight:bold">6.216</div>
<div class="abs rt" style="font-size:9.5px;left:997.5px;top:450px;line-height:12px;font-weight:bold">37- (1.850-OMR)</div>
<div class="abs rt" style="font-size:9.5px;left:997.5px;top:469.5px;line-height:12px;font-weight:bold">151.100</div>

<div class="abs" style="left:0;top:666px;width:47.3px;height:10px;background:#d6d8d8;border-top-right-radius:2px;font-size:9.5px;color:#eef0f0;padding-left:4px;line-height:12px;overflow:hidden;white-space:nowrap">javascript:</div>

</body></html>
